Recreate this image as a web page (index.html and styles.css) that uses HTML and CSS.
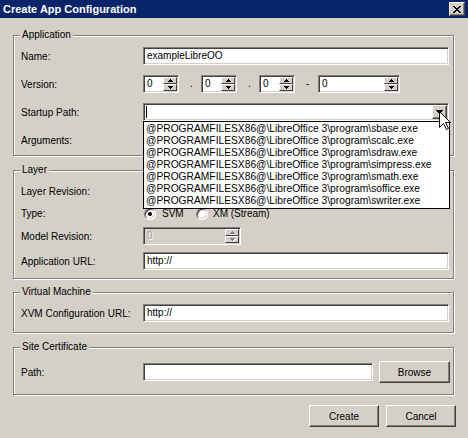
FILE: index.html
```html
<!DOCTYPE html>
<html>
<head>
<meta charset="utf-8">
<title>Create App Configuration</title>
<link rel="stylesheet" href="styles.css">
</head>
<body>
<div class="window">
  <div class="titlebar">
    <span class="title">Create App Configuration</span>
    <span class="close"><svg width="8" height="7" viewBox="0 0 8 7" shape-rendering="crispEdges"><path fill="#000" d="M0 0h2v1H0zM6 0h2v1H6zM1 1h2v1H1zM5 1h2v1H5zM2 2h4v1H2zM3 3h2v1H3zM2 4h4v1H2zM1 5h2v1H1zM5 5h2v1H5zM0 6h2v1H0zM6 6h2v1H6z"/></svg></span>
  </div>
  <div class="main">
    <div class="group g-app">
      <div class="group-title">Application</div>
      <div class="rows">
        <div class="row"><span class="lbl">Name:</span><div class="field w-full">exampleLibreOO</div></div>
        <div class="row">
          <span class="lbl">Version:</span>
          <div class="field spin w-36"><span class="val">0</span><span class="spin-btns"><span class="sb"><svg width="5" height="3" viewBox="0 0 5 3" shape-rendering="crispEdges"><path d="M2 0h1v1H2zM1 1h3v1H1zM0 2h5v1H0z"/></svg></span><span class="sb"><svg width="5" height="3" viewBox="0 0 5 3" shape-rendering="crispEdges"><path d="M0 0h5v1H0zM1 1h3v1H1zM2 2h1v1H2z"/></svg></span></span></div>
          <span class="sep">.</span>
          <div class="field spin w-36"><span class="val">0</span><span class="spin-btns"><span class="sb"><svg width="5" height="3" viewBox="0 0 5 3" shape-rendering="crispEdges"><path d="M2 0h1v1H2zM1 1h3v1H1zM0 2h5v1H0z"/></svg></span><span class="sb"><svg width="5" height="3" viewBox="0 0 5 3" shape-rendering="crispEdges"><path d="M0 0h5v1H0zM1 1h3v1H1zM2 2h1v1H2z"/></svg></span></span></div>
          <span class="sep">.</span>
          <div class="field spin w-36"><span class="val">0</span><span class="spin-btns"><span class="sb"><svg width="5" height="3" viewBox="0 0 5 3" shape-rendering="crispEdges"><path d="M2 0h1v1H2zM1 1h3v1H1zM0 2h5v1H0z"/></svg></span><span class="sb"><svg width="5" height="3" viewBox="0 0 5 3" shape-rendering="crispEdges"><path d="M0 0h5v1H0zM1 1h3v1H1zM2 2h1v1H2z"/></svg></span></span></div>
          <span class="sep sep-wide">-</span>
          <div class="field spin w-82"><span class="val">0</span><span class="spin-btns"><span class="sb"><svg width="5" height="3" viewBox="0 0 5 3" shape-rendering="crispEdges"><path d="M2 0h1v1H2zM1 1h3v1H1zM0 2h5v1H0z"/></svg></span><span class="sb"><svg width="5" height="3" viewBox="0 0 5 3" shape-rendering="crispEdges"><path d="M0 0h5v1H0zM1 1h3v1H1zM2 2h1v1H2z"/></svg></span></span></div>
        </div>
        <div class="row">
          <span class="lbl">Startup Path:</span>
          <div class="field combo w-full">
            <span class="caret"></span>
            <span class="dd-btn"><svg width="7" height="4" viewBox="0 0 7 4" shape-rendering="crispEdges"><path d="M0 0h7v1H0zM1 1h5v1H1zM2 2h3v1H2zM3 3h1v1H3z"/></svg></span>
            <div class="list">
              <div>@PROGRAMFILESX86@\LibreOffice 3\program\sbase.exe</div>
              <div>@PROGRAMFILESX86@\LibreOffice 3\program\scalc.exe</div>
              <div>@PROGRAMFILESX86@\LibreOffice 3\program\sdraw.exe</div>
              <div>@PROGRAMFILESX86@\LibreOffice 3\program\simpress.exe</div>
              <div>@PROGRAMFILESX86@\LibreOffice 3\program\smath.exe</div>
              <div>@PROGRAMFILESX86@\LibreOffice 3\program\soffice.exe</div>
              <div>@PROGRAMFILESX86@\LibreOffice 3\program\swriter.exe</div>
            </div>
            <svg class="cursor" width="13" height="20" viewBox="0 0 13 20"><path d="M0.5 0.5V16.5L4.5 12.5L7.5 18.5L9.5 17.5L6.5 11.5H11.5Z" fill="#fff" stroke="#000" stroke-width="1" stroke-linejoin="miter"/></svg>
          </div>
        </div>
        <div class="row"><span class="lbl">Arguments:</span><div class="field w-full"></div></div>
      </div>
    </div>

    <div class="group g-layer">
      <div class="group-title">Layer</div>
      <div class="rows">
        <div class="row"><span class="lbl">Layer Revision:</span><div class="field w-full"></div></div>
        <div class="row row-type">
          <span class="lbl">Type:</span>
          <span class="opt opt-first"><span class="radio on"></span><span>SVM</span></span>
          <span class="opt"><span class="radio"></span><span>XM (Stream)</span></span>
        </div>
        <div class="row row-model">
          <span class="lbl">Model Revision:</span>
          <div class="field spin disabled w-98"><span class="val">0</span><span class="spin-btns"><span class="sb"><svg width="5" height="3" viewBox="0 0 5 3" shape-rendering="crispEdges"><path d="M2 0h1v1H2zM1 1h3v1H1zM0 2h5v1H0z"/></svg></span><span class="sb"><svg width="5" height="3" viewBox="0 0 5 3" shape-rendering="crispEdges"><path d="M0 0h5v1H0zM1 1h3v1H1zM2 2h1v1H2z"/></svg></span></span></div>
        </div>
        <div class="row row-url"><span class="lbl">Application URL:</span><div class="field w-full">http://</div></div>
      </div>
    </div>

    <div class="group g-vm">
      <div class="group-title">Virtual Machine</div>
      <div class="rows">
        <div class="row"><span class="lbl">XVM Configuration URL:</span><div class="field w-full">http://</div></div>
      </div>
    </div>

    <div class="group g-site">
      <div class="group-title">Site Certificate</div>
      <div class="rows">
        <div class="row row-path">
          <span class="lbl">Path:</span>
          <div class="field w-path"></div>
          <span class="btn btn-browse">Browse</span>
        </div>
      </div>
    </div>

    <div class="buttons">
      <span class="btn">Create</span>
      <span class="btn">Cancel</span>
    </div>
  </div>
</div>
</body>
</html>
```

FILE: styles.css
```css
* { box-sizing: border-box; }
html, body { margin: 0; padding: 0; }
body {
  width: 468px;
  height: 438px;
  overflow: hidden;
  background: #d4d0c8;
  font-family: "Liberation Sans", Arial, sans-serif;
  font-size: 10px;
  color: #000;
}
.window { width: 468px; height: 438px; }

.titlebar {
  height: 18px;
  background: #0a246a;
  color: #fff;
  display: flex;
  align-items: center;
  justify-content: space-between;
  padding: 0 3px 0 3px;
}
.title { font-weight: bold; font-size: 11px; line-height: 13px; }
.close {
  width: 16px;
  height: 14px;
  background: #d4d0c8;
  border: 1px solid;
  border-color: #fff #404040 #404040 #fff;
  box-shadow: inset -1px -1px 0 #808080;
  display: flex;
  align-items: center;
  justify-content: center;
  padding-right: 1px;
}
.close svg { display: block; }

.main {
  padding: 0 14px 0 13px;
  display: flex;
  flex-direction: column;
}

.group {
  border: 1px solid #808080;
  box-shadow: inset 1px 1px 0 #fff, 1px 1px 0 #fff;
  padding: 0 4px 0 7px;
  display: flex;
  flex-direction: column;
}
.group-title {
  margin: -7px 0 0 -1px;
  padding: 0 2px;
  background: #d4d0c8;
  line-height: 12px;
  align-self: flex-start;
}
.rows { display: flex; flex-direction: column; padding-top: 6px; }

.g-app { margin-top: 17px; padding-bottom: 6px; }
.g-app .rows { gap: 10px; }
.g-layer { margin-top: 14px; padding-bottom: 8px; }
.g-vm { margin-top: 13px; padding-bottom: 10px; }
.g-site { margin-top: 14px; padding-bottom: 11px; }

.row { display: flex; align-items: center; height: 18px; }
.lbl { width: 122px; flex: none; white-space: nowrap; }

.row-type { height: 15px; margin-top: 6px; }
.row-model { margin-top: 6px; }
.row-url { margin-top: 7px; }
.row-path { height: 22px; margin-top: 2px; }

.field {
  height: 18px;
  flex: none;
  background: #fff;
  border: 1px solid;
  border-color: #808080 #fff #fff #808080;
  box-shadow: inset 1px 1px 0 #404040, inset -1px -1px 0 #d4d0c8;
  padding: 0 3px;
  line-height: 16px;
  white-space: nowrap;
}
.w-full { width: 306px; }
.w-36 { width: 36px; }
.w-82 { width: 82px; }
.w-98 { width: 98px; }
.w-path { width: 230px; }

.spin { display: flex; padding: 1px 1px 1px 3px; }
.spin .val { flex: 1; line-height: 14px; }
.spin-btns { display: flex; flex-direction: column; width: 14px; flex: none; }
.sb {
  height: 7px;
  background: #d4d0c8;
  border: 1px solid;
  border-color: #fff #404040 #404040 #fff;
  display: flex;
  align-items: center;
  justify-content: center;
}
.sb svg { display: block; fill: #000; }
.disabled { background: #d4d0c8; }
.disabled .val { color: #a0a0a0; text-shadow: 1px 1px 0 #fff; }
.disabled .sb svg { fill: #808080; filter: drop-shadow(1px 1px 0 #fff); }

.sep { width: 22px; flex: none; padding-left: 11px; line-height: 16px; }
.sep-wide { width: 23px; }

.combo {
  position: relative;
  display: flex;
  align-items: flex-start;
  padding: 1px 1px 1px 2px;
}
.caret { width: 1px; height: 12px; margin-top: 1px; background: #000; flex: none; }
.dd-btn {
  margin-left: auto;
  width: 15px;
  height: 14px;
  background: #d4d0c8;
  border: 1px solid;
  border-color: #fff #404040 #404040 #fff;
  box-shadow: inset -1px -1px 0 #808080;
  display: flex;
  align-items: center;
  justify-content: center;
}
.dd-btn svg { display: block; fill: #000; }

.list {
  position: absolute;
  top: 17px;
  left: -1px;
  width: 307px;
  background: #fff;
  border: 1px solid #000;
  padding: 1px 0;
  z-index: 2;
}
.list div { height: 12px; line-height: 12px; padding-left: 2px; white-space: nowrap; font-size: 10.25px; }

.cursor { position: absolute; left: 295px; top: 7px; z-index: 3; display: block; }

.opt { display: flex; align-items: center; gap: 6px; flex: none; }
.opt-first { width: 52px; margin-left: 1px; }
.opt + .opt { gap: 5px; }
.radio {
  width: 12px;
  height: 12px;
  border-radius: 50%;
  background: #fff;
  border: 1px solid;
  border-color: #808080 #fff #fff #808080;
  box-shadow: inset 1px 1px 0 #404040, inset -1px -1px 0 #d4d0c8;
  display: flex;
  align-items: center;
  justify-content: center;
  flex: none;
}
.radio.on::after {
  content: "";
  width: 4px;
  height: 4px;
  border-radius: 50%;
  background: #000;
}

.btn {
  height: 22px;
  width: 70px;
  flex: none;
  background: #d4d0c8;
  border: 1px solid;
  border-color: #fff #404040 #404040 #fff;
  box-shadow: inset -1px -1px 0 #808080;
  display: flex;
  align-items: center;
  justify-content: center;
}
.btn-browse { width: 71px; margin-left: 6px; }

.buttons {
  display: flex;
  justify-content: flex-end;
  gap: 7px;
  margin-top: 10px;
  margin-right: -2px;
}
```
